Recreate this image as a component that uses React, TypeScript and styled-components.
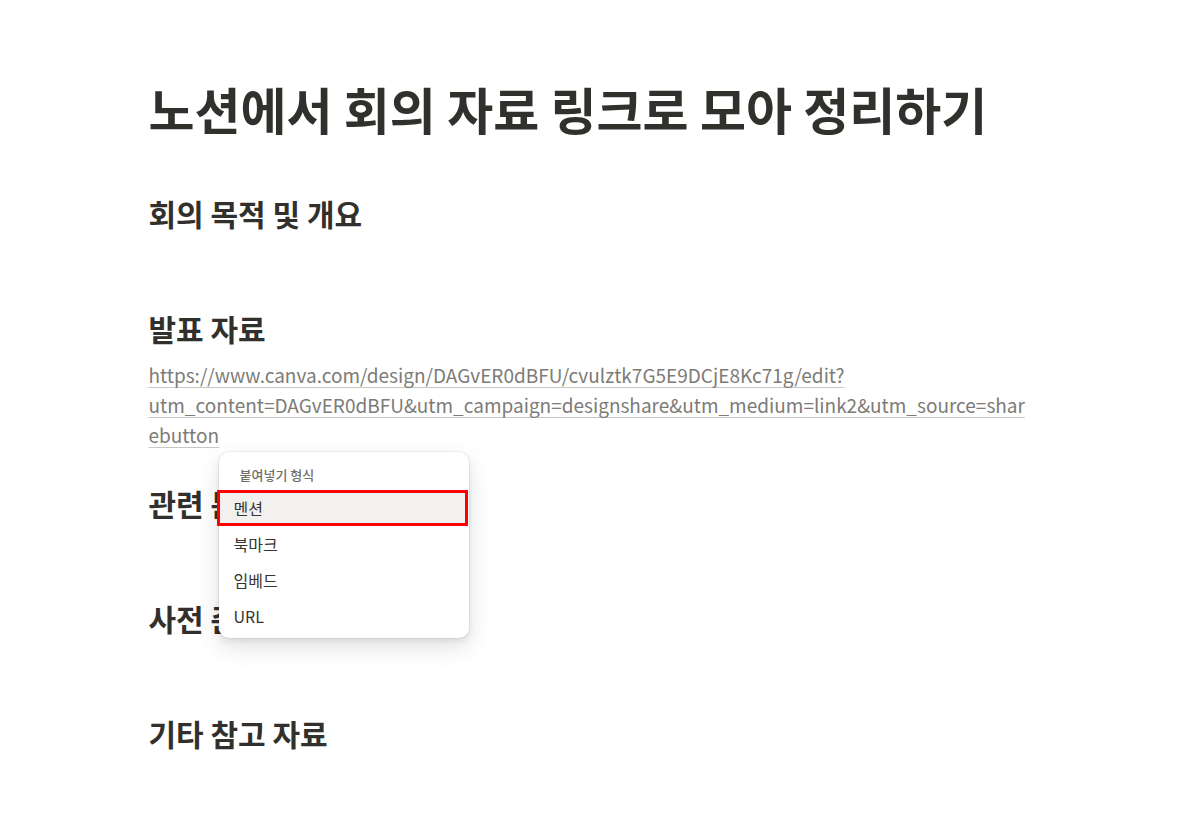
import React from "react";
import styled, { createGlobalStyle } from "styled-components";

const GlobalStyle = createGlobalStyle`
  body {
    margin: 0;
    background: #ffffff;
    font-family: "Noto Sans CJK KR", "Noto Sans", sans-serif;
    color: #37352f;
  }
`;

const Page = styled.main`
  position: relative;
  max-width: 888px;
  margin: 0 auto;
  padding-top: 78px;
  min-height: 816px;
  box-sizing: border-box;
`;

const Title = styled.h1`
  margin: 0 0 57px;
  font-size: 50px;
  line-height: 60px;
  font-weight: 700;
  color: #32302c;
`;

const Heading = styled.h2`
  margin: 35px 0 14px;
  font-size: 30px;
  line-height: 36px;
  font-weight: 700;
  color: #32302c;
`;

const Paragraph = styled.p`
  margin: 0;
  padding-right: 6px;
  min-height: 30px;
  font-size: 19px;
  line-height: 30px;
  word-break: break-all;
`;

const Link = styled.a`
  color: #7d7b77;
  text-decoration: underline;
  text-decoration-color: #c8c7c4;
  text-decoration-thickness: 1px;
  text-underline-offset: 4px;
`;

const Menu = styled.div`
  position: absolute;
  left: 70px;
  top: 452px;
  width: 250px;
  padding: 6px 0 4px;
  background: #ffffff;
  border-radius: 10px;
  box-shadow: rgba(15, 15, 15, 0.05) 0 0 0 1px, rgba(15, 15, 15, 0.08) 0 3px 6px,
    rgba(15, 15, 15, 0.12) 0 9px 24px;
  box-sizing: border-box;
`;

const MenuLabel = styled.div`
  padding: 0 21px;
  height: 32px;
  display: flex;
  align-items: center;
  font-size: 13px;
  font-weight: 500;
  color: #6f6e69;
`;

const MenuItem = styled.div<{ $active?: boolean; $marked?: boolean }>`
  height: 36px;
  margin: 0 1px 0 -2px;
  padding: 0 17px;
  display: flex;
  align-items: center;
  font-size: 16px;
  color: #37352f;
  background: ${(p) => (p.$active ? "#f2f1ef" : "transparent")};
  outline: ${(p) => (p.$marked ? "3px solid #ff0000" : "none")};
  outline-offset: -3px;
`;

const formats = ["멘션", "북마크", "임베드", "URL"];

const urlPath =
  "https://www.canva.com/design/DAGvER0dBFU/cvulztk7G5E9DCjE8Kc71g/edit?";
const urlQuery =
  "utm_content=DAGvER0dBFU&utm_campaign=designshare&utm_medium=link2&utm_source=sharebutton";

export default function App() {
  return (
    <>
      <GlobalStyle />
      <Page>
        <Title>노션에서 회의 자료 링크로 모아 정리하기</Title>
        <Heading>회의 목적 및 개요</Heading>
        <Paragraph />
        <Heading>발표 자료</Heading>
        <Paragraph>
          <Link href="#">
            {urlPath}
            <br />
            {urlQuery}
          </Link>
        </Paragraph>
        <Heading>관련 문서</Heading>
        <Paragraph />
        <Heading>사전 준비 자료</Heading>
        <Paragraph />
        <Heading>기타 참고 자료</Heading>
        <Paragraph />
        <Menu>
          <MenuLabel>붙여넣기 형식</MenuLabel>
          {formats.map((f, i) => (
            <MenuItem key={f} $active={i === 0} $marked={i === 0}>
              {f}
            </MenuItem>
          ))}
        </Menu>
      </Page>
    </>
  );
}
